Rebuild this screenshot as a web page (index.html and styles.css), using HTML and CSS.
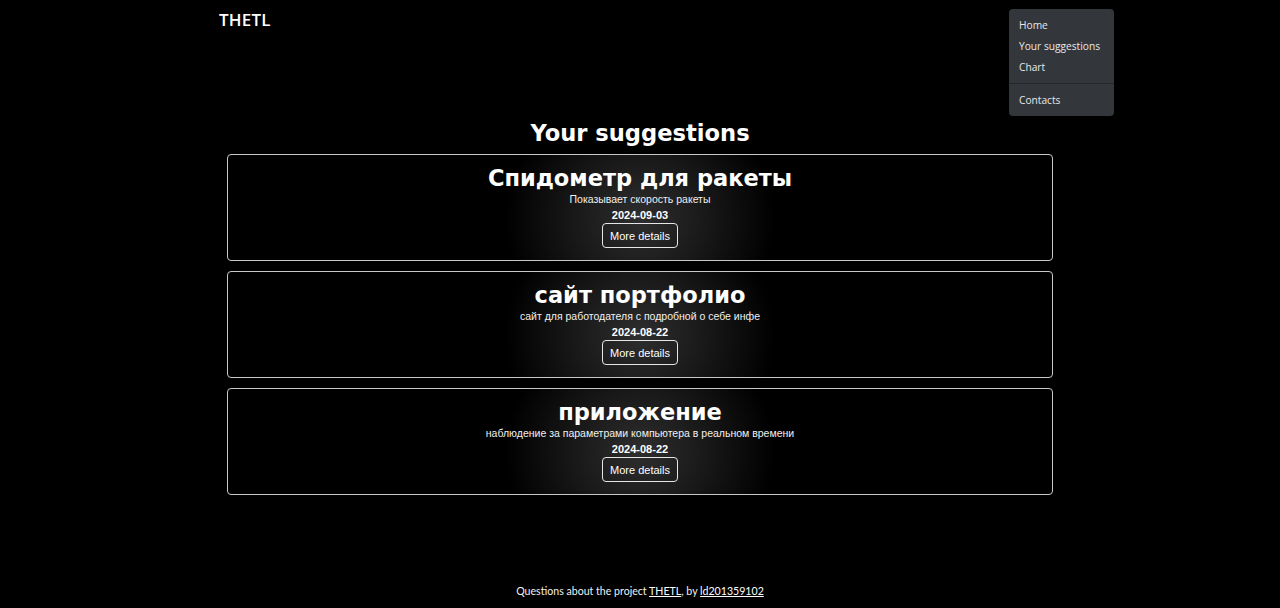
FILE: index.html
```html
<!DOCTYPE html>
<html lang="en">
<head>
<meta charset="utf-8">
<title>THETL - Your suggestions</title>
<link rel="stylesheet" href="styles.css">
</head>
<body>
<div class="page">
  <header class="topbar">
    <a class="brand" href="#">THETL</a>
    <ul class="menu">
      <li><a href="#">Home</a></li>
      <li><a href="#">Your suggestions</a></li>
      <li><a href="#">Chart</a></li>
      <li class="divider"></li>
      <li><a href="#">Contacts</a></li>
    </ul>
  </header>
  <main class="content">
    <h1 class="page-title">Your suggestions</h1>
    <div class="cards">
      <div class="card">
        <h2 class="card-title">Спидометр для ракеты</h2>
        <p class="card-desc">Показывает скорость ракеты</p>
        <p class="card-date">2024-09-03</p>
        <a class="btn" href="#">More details</a>
      </div>
      <div class="card">
        <h2 class="card-title">сайт портфолио</h2>
        <p class="card-desc">сайт для работодателя с подробной о себе инфе</p>
        <p class="card-date">2024-08-22</p>
        <a class="btn" href="#">More details</a>
      </div>
      <div class="card">
        <h2 class="card-title">приложение</h2>
        <p class="card-desc">наблюдение за параметрами компьютера в реальном времени</p>
        <p class="card-date">2024-08-22</p>
        <a class="btn" href="#">More details</a>
      </div>
    </div>
  </main>
  <footer class="footer">
    Questions about the project <a href="#">THETL</a>, by <a href="#">ld201359102</a>
  </footer>
</div>
</body>
</html>
```
FILE: styles.css
```css
html, body {
  margin: 0;
  padding: 0;
  background: #000;
  color: #fff;
}

.page {
  min-height: 100vh;
  display: flex;
  flex-direction: column;
}

.topbar {
  height: 38px;
  display: flex;
  align-items: center;
  padding-left: 219px;
}

.brand {
  font-family: "Open Sans", "Liberation Sans", sans-serif;
  font-weight: 600;
  font-size: 17px;
  color: #fff;
  text-decoration: none;
  letter-spacing: 0.2px;
}

.menu {
  position: absolute;
  left: 1009px;
  top: 9px;
  width: 105px;
  margin: 0;
  padding: 6px 0 5px;
  list-style: none;
  background: #33363b;
  border-radius: 4px;
  font-family: "Open Sans", "Liberation Sans", sans-serif;
  font-size: 10.2px;
}

.menu a {
  display: block;
  line-height: 21px;
  padding: 0 10px;
  color: #e8e8e8;
  text-decoration: none;
  white-space: nowrap;
}

.menu .divider {
  height: 1px;
  margin: 5px 0 6px;
  background: #23262a;
}

.content {
  display: flex;
  flex-direction: column;
  align-items: center;
}

.page-title {
  margin: 79px 0 5px;
  font-family: "DejaVu Sans", sans-serif;
  font-weight: bold;
  font-size: 22.6px;
  line-height: 32px;
}

.cards {
  width: 826px;
  display: flex;
  flex-direction: column;
  gap: 10px;
}

.card {
  border: 1px solid #c8c8c8;
  border-radius: 4px;
  padding: 8px 0 12px;
  display: flex;
  flex-direction: column;
  align-items: center;
  text-align: center;
  background: radial-gradient(ellipse 135px 120% at 50% 60%, #2e2e2e 0%, #181818 50%, #000 100%);
}

.card-title {
  margin: 0;
  font-family: "DejaVu Sans", sans-serif;
  font-weight: bold;
  font-size: 22.5px;
  line-height: 30px;
}

.card-desc {
  margin: 0;
  font-family: "Liberation Sans", Arial, sans-serif;
  font-size: 10.5px;
  line-height: 12px;
  color: #f0f0f0;
}

.card-date {
  margin: 2px 0 0;
  font-family: "Liberation Sans", Arial, sans-serif;
  font-weight: bold;
  font-size: 11px;
  line-height: 16px;
}

.btn {
  box-sizing: border-box;
  height: 25px;
  width: 76px;
  display: flex;
  align-items: center;
  justify-content: center;
  border: 1px solid #e6e6e6;
  border-radius: 4px;
  font-family: "Liberation Sans", Arial, sans-serif;
  font-size: 11px;
  color: #fff;
  text-decoration: none;
}

.footer {
  margin-top: auto;
  padding-bottom: 10px;
  text-align: center;
  font-family: Lato, "Liberation Sans", sans-serif;
  font-size: 10.6px;
  line-height: 13px;
  color: #f0f0f0;
}

.footer a {
  color: #fff;
  text-decoration: underline;
}
```
